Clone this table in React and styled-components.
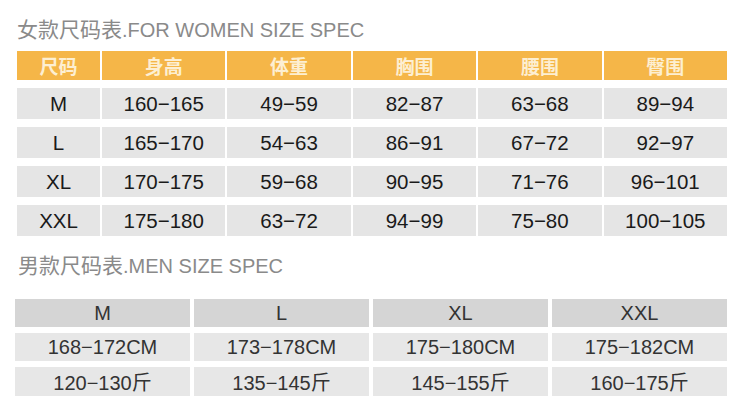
import React from "react";
import styled, { createGlobalStyle } from "styled-components";

const Global = createGlobalStyle`
  html, body { margin: 0; padding: 0; background: #ffffff; }
  body { font-family: "Liberation Sans", "Noto Sans CJK SC", sans-serif; }
`;

const Page = styled.div`
  width: 750px;
  height: 415px;
  box-sizing: border-box;
  padding: 18px 23px 0 15px;
  overflow: hidden;
  display: flex;
  flex-direction: column;
`;

const Title = styled.div`
  height: 24px;
  line-height: 24px;
  font-size: 20px;
  color: #8a8a8a;
  white-space: nowrap;
  margin-left: ${(p) => p.$indent || 0}px;
  margin-top: ${(p) => p.$top || 0}px;
`;

const Cjk = styled.span`
  font-size: 21px;
`;

const WomenGrid = styled.div`
  margin-top: 9px;
  margin-left: 2px;
  display: grid;
  grid-template-columns: 83px repeat(5, 1fr);
  grid-template-rows: 29px repeat(4, 31px);
  column-gap: 2px;
  row-gap: 8px;
`;

const HeadCell = styled.div`
  background: #f5b648;
  color: #fdefd2;
  font-size: 19px;
  font-weight: 700;
  display: flex;
  align-items: center;
  justify-content: center;
`;

const Cell = styled.div`
  background: #e5e5e5;
  color: #1a1a1a;
  font-size: 20.5px;
  display: flex;
  align-items: center;
  justify-content: center;
  white-space: nowrap;
`;

const MenGrid = styled.div`
  margin-top: 21px;
  display: grid;
  grid-template-columns: repeat(4, 1fr);
  grid-template-rows: 28px 28px 29px;
  column-gap: 4px;
  row-gap: 6px;
`;

const MenCell = styled.div`
  background: ${(p) => (p.$head ? "#d5d5d5" : "#e7e7e7")};
  color: #333333;
  font-size: 20px;
  display: flex;
  align-items: center;
  justify-content: center;
  white-space: nowrap;
`;

const womenHead = ["尺码", "身高", "体重", "胸围", "腰围", "臀围"];
const womenRows = [
  ["M", "160−165", "49−59", "82−87", "63−68", "89−94"],
  ["L", "165−170", "54−63", "86−91", "67−72", "92−97"],
  ["XL", "170−175", "59−68", "90−95", "71−76", "96−101"],
  ["XXL", "175−180", "63−72", "94−99", "75−80", "100−105"],
];

const menHead = ["M", "L", "XL", "XXL"];
const menRows = [
  ["168−172CM", "173−178CM", "175−180CM", "175−182CM"],
  ["120−130斤", "135−145斤", "145−155斤", "160−175斤"],
];

export default function App() {
  return (
    <>
      <Global />
      <Page>
        <Title $indent={2}>
          <Cjk>女款尺码表</Cjk>.FOR WOMEN SIZE SPEC
        </Title>
        <WomenGrid>
          {womenHead.map((h) => (
            <HeadCell key={h}>{h}</HeadCell>
          ))}
          {womenRows.map((r) =>
            r.map((v, i) => <Cell key={r[0] + i}>{v}</Cell>)
          )}
        </WomenGrid>
        <Title $indent={3} $top={18}>
          <Cjk>男款尺码表</Cjk>.MEN SIZE SPEC
        </Title>
        <MenGrid>
          {menHead.map((h) => (
            <MenCell key={h} $head>
              {h}
            </MenCell>
          ))}
          {menRows.map((r, ri) =>
            r.map((v, i) => <MenCell key={ri + "-" + i}>{v}</MenCell>)
          )}
        </MenGrid>
      </Page>
    </>
  );
}
